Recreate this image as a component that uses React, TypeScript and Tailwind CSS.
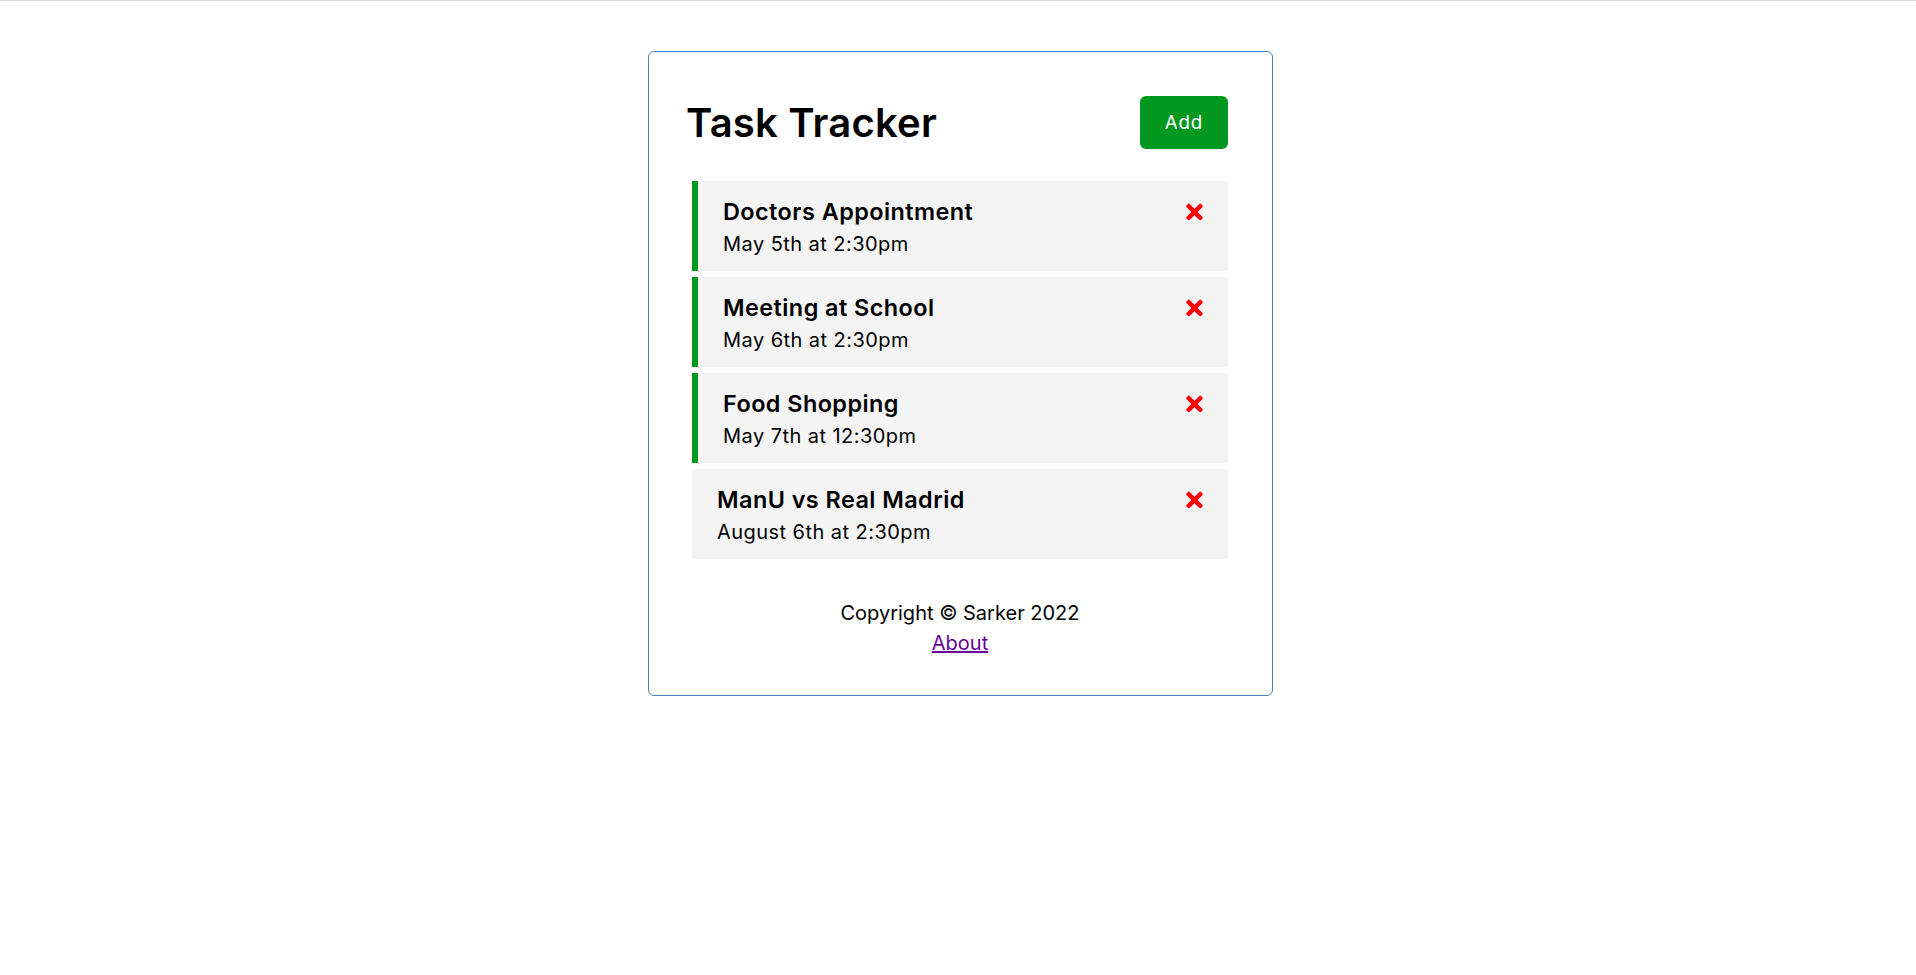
import React from 'react';
import { FaTimes } from 'react-icons/fa';

type Task = {
  id: number;
  text: string;
  day: string;
  reminder: boolean;
};

const tasks: Task[] = [
  { id: 1, text: 'Doctors Appointment', day: 'May 5th at 2:30pm', reminder: true },
  { id: 2, text: 'Meeting at School', day: 'May 6th at 2:30pm', reminder: true },
  { id: 3, text: 'Food Shopping', day: 'May 7th at 12:30pm', reminder: true },
  { id: 4, text: 'ManU vs Real Madrid', day: 'August 6th at 2:30pm', reminder: false },
];

const TaskItem: React.FC<{ task: Task }> = ({ task }) => {
  return (
    <div
      className={`bg-[#f4f4f4] pt-[13.5px] pb-[11.5px] pr-[25px] pl-[25px] cursor-pointer ${
        task.reminder ? 'border-l-[6px] border-[#00981e]' : ''
      }`}
    >
      <h3 className="flex items-center justify-between text-[23.4px] leading-[35px] font-semibold tracking-[0.45px] text-black">
        {task.text}
        <FaTimes className="text-[#ff0000] w-[17px] h-[24px]" />
      </h3>
      <p className="text-[20px] leading-[30px] tracking-[0.45px] text-black">{task.day}</p>
    </div>
  );
};

const App: React.FC = () => {
  return (
    <div className="min-h-screen bg-white border-t border-[#dcdcdc] pl-1 font-['Inter',sans-serif]">
      <div className="w-[625px] mx-auto mt-[50px] border border-[#4682b4] rounded-[6px] p-[37.5px]">
        {/* Header */}
        <header className="flex items-center justify-between mb-[26px]">
          <h1 className="text-[40px] leading-[50px] font-semibold tracking-[0.2px] text-black pt-[2px]">Task Tracker</h1>
          <button className="m-[6px] px-[25px] pt-[13.5px] pb-[11.5px] rounded-[6px] bg-[#00981e] text-white text-[18.75px] leading-[28px] tracking-[0.8px] cursor-pointer">
            Add
          </button>
        </header>

        {/* Tasks */}
        <div className="flex flex-col gap-[6px] mx-[6px]">
          {tasks.map((task) => (
            <TaskItem key={task.id} task={task} />
          ))}
        </div>

        {/* Footer */}
        <footer className="mt-[39px] text-center text-[20px] leading-[30px] text-black">
          <p>Copyright © Sarker 2022</p>
          <a href="#" className="text-[#660099] underline">
            About
          </a>
        </footer>
      </div>
    </div>
  );
};

export default App;
